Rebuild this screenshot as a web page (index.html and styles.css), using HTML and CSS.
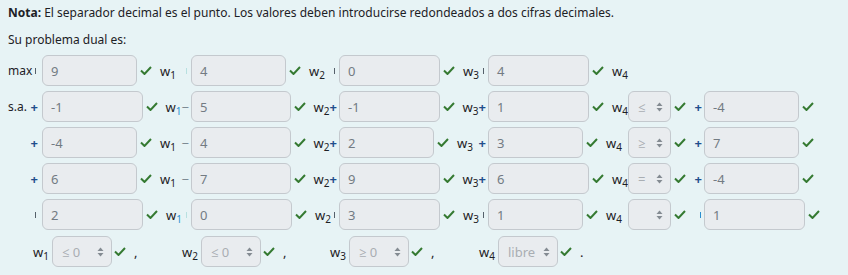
FILE: index.html
```html
<!DOCTYPE html>
<html lang="es">
<head>
    <meta charset="UTF-8">
    <title>Problema dual</title>
    <link rel="stylesheet" href="styles.css">
</head>
<body>
    <p class="nota"><b>Nota:</b> El separador decimal es el punto. Los valores deben introducirse redondeados a dos cifras decimales.</p>
    <p class="intro">Su problema dual es:</p>

    <div class="row">
        <div class="lead"><span>max</span><span class="tick"></span></div>
        <div class="cell"><span class="box n">9</span><span class="ok"></span><span class="var">w<sub>1</sub></span><span class="tick pale"></span></div>
        <div class="cell"><span class="box n">4</span><span class="ok"></span><span class="var">w<sub>2</sub></span><span class="tick"></span></div>
        <div class="cell"><span class="box wd">0</span><span class="ok"></span><span class="var">w<sub>3</sub></span><span class="tick"></span></div>
        <div class="cell"><span class="box wd">4</span><span class="ok"></span><span class="var">w<sub>4</sub></span></div>
    </div>

    <div class="row">
        <div class="lead"><span>s.a.</span><span class="op">+</span></div>
        <div class="cell"><span class="box wd">-1</span><span class="ok"></span><span class="var">w<sub class="blue">1</sub></span><span class="op minus">−</span></div>
        <div class="cell"><span class="box wd">5</span><span class="ok"></span><span class="var">w<sub>2</sub></span><span class="op">+</span></div>
        <div class="cell"><span class="box wd">-1</span><span class="ok"></span><span class="var">w<sub>3</sub></span><span class="op">+</span></div>
        <div class="cell"><span class="box wd">1</span><span class="ok"></span><span class="var">w<sub>4</sub></span></div>
        <div class="cell"><span class="sel">≤<i class="arrows"></i></span><span class="ok"></span><span class="op">+</span></div>
        <div class="cell"><span class="box n">-4</span><span class="ok"></span></div>
    </div>

    <div class="row">
        <div class="lead"><span></span><span class="op">+</span></div>
        <div class="cell"><span class="box n">-4</span><span class="ok"></span><span class="var">w<sub>1</sub></span><span class="op minus">−</span></div>
        <div class="cell"><span class="box wd">4</span><span class="ok"></span><span class="var">w<sub>2</sub></span><span class="op">+</span></div>
        <div class="cell"><span class="box n">2</span><span class="ok"></span><span class="var">w<sub>3</sub></span><span class="op">+</span></div>
        <div class="cell"><span class="box n">3</span><span class="ok"></span><span class="var">w<sub>4</sub></span></div>
        <div class="cell"><span class="sel">≥<i class="arrows"></i></span><span class="ok"></span><span class="op">+</span></div>
        <div class="cell"><span class="box n">7</span><span class="ok"></span></div>
    </div>

    <div class="row">
        <div class="lead"><span></span><span class="op">+</span></div>
        <div class="cell"><span class="box n">6</span><span class="ok"></span><span class="var">w<sub>1</sub></span><span class="op minus">−</span></div>
        <div class="cell"><span class="box wd">7</span><span class="ok"></span><span class="var">w<sub>2</sub></span><span class="op">+</span></div>
        <div class="cell"><span class="box wd">9</span><span class="ok"></span><span class="var">w<sub>3</sub></span><span class="op">+</span></div>
        <div class="cell"><span class="box wd">6</span><span class="ok"></span><span class="var">w<sub>4</sub></span></div>
        <div class="cell"><span class="sel">=<i class="arrows"></i></span><span class="ok"></span><span class="op">+</span></div>
        <div class="cell"><span class="box n">-4</span><span class="ok"></span></div>
    </div>

    <div class="row">
        <div class="lead"><span></span><span class="tick"></span></div>
        <div class="cell"><span class="box wd">2</span><span class="ok"></span><span class="var">w<sub class="blue">1</sub></span><span class="tick pale"></span></div>
        <div class="cell"><span class="box wd">0</span><span class="ok"></span><span class="var">w<sub>2</sub></span><span class="tick"></span></div>
        <div class="cell"><span class="box wd">3</span><span class="ok"></span><span class="var">w<sub>3</sub></span><span class="tick"></span></div>
        <div class="cell"><span class="box n">1</span><span class="ok"></span><span class="var">w<sub>4</sub></span></div>
        <div class="cell"><span class="sel"><i class="arrows"></i></span><span class="ok"></span><span class="tick blue-tick"></span></div>
        <div class="cell"><span class="box wd">1</span><span class="ok"></span></div>
    </div>

    <div class="signs">
        <div class="sign"><span class="var">w<sub>1</sub></span><span class="sel wide">≤ 0<i class="arrows"></i></span><span class="ok"></span><span class="sep">,</span></div>
        <div class="sign"><span class="var">w<sub>2</sub></span><span class="sel wide">≤ 0<i class="arrows"></i></span><span class="ok"></span><span class="sep">,</span></div>
        <div class="sign"><span class="var">w<sub>3</sub></span><span class="sel wide">≥ 0<i class="arrows"></i></span><span class="ok"></span><span class="sep">,</span></div>
        <div class="sign"><span class="var">w<sub>4</sub></span><span class="sel wide">libre<i class="arrows"></i></span><span class="ok"></span><span class="sep">.</span></div>
    </div>
</body>
</html>
```

FILE: styles.css
```css
body {
    margin: 0;
    padding: 0 8px;
    background-color: #e7f3f5;
    font-family: "Noto Sans", "Open Sans", sans-serif;
    font-size: 12px;
    color: #1d2125;
}
p {
    margin: 0;
    line-height: 18px;
}
.nota {
    padding-top: 4px;
    margin-bottom: 9px;
}
.intro {
    margin-bottom: 6px;
}
.row {
    display: grid;
    grid-template-columns: 34px 149px 148px 149px 140px 76px 1fr;
    height: 31px;
    margin-bottom: 5px;
    align-items: center;
}
.lead {
    display: flex;
    align-items: center;
    justify-content: space-between;
    padding-right: 2px;
}
.cell {
    display: flex;
    align-items: center;
    height: 31px;
}
.box, .sel {
    box-sizing: border-box;
    height: 31px;
    border: 1px solid #c4c9ce;
    border-radius: 6px;
    background-color: #e9ecef;
    color: #737b83;
    padding: 0 8px;
    display: flex;
    align-items: center;
    font-size: 13px;
}
.box.n {
    width: 95px;
}
.box.wd {
    width: 101px;
}
.sel {
    width: 43px;
    padding: 0 7px 0 9px;
    color: #a9aeb3;
    justify-content: space-between;
}
.sel.wide {
    width: 60px;
    margin-left: 3px;
}
.arrows {
    width: 7px;
    height: 10px;
    margin-left: auto;
    background: url("data:image/svg+xml;utf8,<svg xmlns='http://www.w3.org/2000/svg' width='7' height='10' viewBox='0 0 7 10'><polygon points='0.5,4 3.5,0.5 6.5,4' fill='%23848b92'/><polygon points='0.5,6 3.5,9.5 6.5,6' fill='%23848b92'/></svg>") no-repeat;
}
.ok {
    width: 12px;
    height: 9px;
    margin-left: 3px;
    flex-shrink: 0;
    background: url("data:image/svg+xml;utf8,<svg xmlns='http://www.w3.org/2000/svg' width='12' height='9' viewBox='0 0 12 9'><polyline points='1,4.5 4.5,8 11,1' fill='none' stroke='%23357a32' stroke-width='2'/></svg>") no-repeat;
}
.var {
    margin-left: 8px;
    font-size: 13px;
    color: #1d2125;
}
.var sub {
    font-size: 10px;
    vertical-align: -3px;
    line-height: 0;
}
.var sub.blue {
    color: #2a8fd0;
}
.op {
    margin-left: auto;
    margin-right: 2px;
    font-size: 13px;
    font-weight: bold;
    color: #1f4e8c;
}
.op.minus {
    font-weight: normal;
    color: #7d8a93;
}
.tick {
    margin-left: auto;
    margin-right: 4px;
    width: 1px;
    height: 6px;
    background-color: #55606a;
}
.tick.pale {
    background-color: #b8e0e0;
}
.tick.blue-tick {
    margin-right: 3px;
    background-color: #2a8fd0;
}
.signs {
    display: grid;
    grid-template-columns: 149px 148px 149px 149px;
    padding-left: 25px;
    margin-top: 6px;
}
.sign {
    display: flex;
    align-items: center;
    height: 31px;
}
.sign .var {
    margin-left: 0;
}
.sign .ok {
    margin-left: 2px;
}
.sep {
    margin-left: 8px;
    font-size: 13px;
}
```
